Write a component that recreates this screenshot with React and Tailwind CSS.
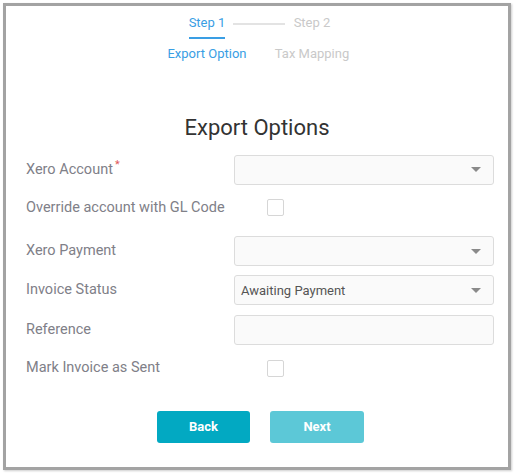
import React from "react";

const Caret = () => (
  <span className="ml-auto mr-[12px] h-0 w-0 border-x-[5px] border-t-[5px] border-x-transparent border-t-[#8a8a8a]"></span>
);

const Select = ({ value }) => (
  <div className="flex h-[30px] w-[260px] items-center rounded-[3px] border border-[#dcdcdc] bg-[#fafafa] pl-[6px] text-[13px] text-[#555]">
    {value}
    <Caret />
  </div>
);

const Checkbox = () => (
  <div className="ml-[33px] h-[17px] w-[17px] rounded-[2px] border border-[#d6d6d6] bg-white"></div>
);

const Row = ({ label, required, children, className = "" }) => (
  <div className={`flex items-center ${className}`}>
    <div className="w-[208px] text-[14.5px] text-[#808088]">
      {label}
      {required && <sup className="ml-[2px] text-[11px] text-[#e0595a]">*</sup>}
    </div>
    {children}
  </div>
);

export default function App() {
  return (
    <div className="h-[475px] w-[514px] bg-white pl-[3px] pt-[3px]" style={{ fontFamily: "Roboto, 'Noto Sans', sans-serif" }}>
      <div className="h-[467px] w-[508px] border-[3px] border-[#a3a3a3] bg-white shadow-[1px_1px_2px_rgba(0,0,0,0.2)]">
        <div className="flex justify-center pl-[5px] pt-[8px]">
          <div className="flex w-[105px] flex-col items-center">
            <div className="border-b-2 border-[#3a9ee4] pb-[5px] text-[13px] leading-[18px] text-[#3a9ee4]">Step 1</div>
            <div className="mt-[5px] text-[13px] text-[#3a9ee4]">Export Option</div>
          </div>
          <div className="relative flex w-[105px] flex-col items-center">
            <div className="absolute left-[-27px] top-[9px] h-[2px] w-[52px] bg-[#e3e3e3]"></div>
            <div className="pb-[7px] text-[13px] leading-[18px] text-[#c9c9c9]">Step 2</div>
            <div className="mt-[5px] text-[13px] text-[#c9c9c9]">Tax Mapping</div>
          </div>
        </div>

        <h2 className="mt-[52px] text-center text-[22px] leading-[24px] text-[#333]">Export Options</h2>

        <div className="mt-[15px] pl-[20px]">
          <Row label="Xero Account" required>
            <Select />
          </Row>
          <Row label="Override account with GL Code" className="mt-[12px]">
            <Checkbox />
          </Row>
          <Row label="Xero Payment" className="mt-[18px]">
            <Select />
          </Row>
          <Row label="Invoice Status" className="mt-[9px]">
            <Select value="Awaiting Payment" />
          </Row>
          <Row label="Reference" className="mt-[10px]">
            <div className="h-[30px] w-[260px] rounded-[3px] border border-[#dcdcdc] bg-[#fafafa]"></div>
          </Row>
          <Row label="Mark Invoice as Sent" className="mt-[12px]">
            <Checkbox />
          </Row>
        </div>

        <div className="mt-[32px] flex justify-center gap-[20px] pl-[7px]">
          <button className="h-[32px] w-[93px] rounded-[3px] bg-[#02a9c2] text-[13px] font-bold text-white">Back</button>
          <button className="h-[32px] w-[94px] rounded-[3px] bg-[#5cc8d7] text-[13px] font-bold text-white">Next</button>
        </div>
      </div>
    </div>
  );
}
